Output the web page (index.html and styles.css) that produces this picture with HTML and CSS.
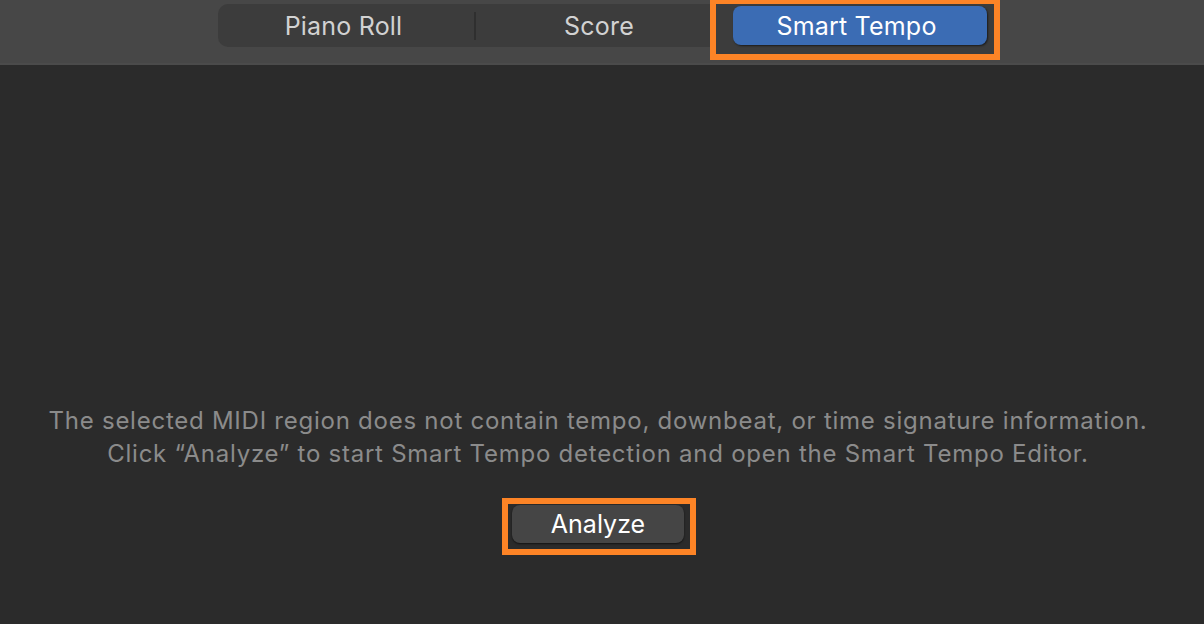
FILE: index.html
```html
<!DOCTYPE html>
<html lang="en">
<head>
    <meta charset="UTF-8">
    <meta name="viewport" content="width=device-width, initial-scale=1.0">
    <title>Smart Tempo</title>
    <link rel="stylesheet" href="styles.css">
</head>
<body>
    <div class="toolbar">
        <div class="segmented">
            <button class="segment piano">Piano Roll</button>
            <span class="divider"></span>
            <button class="segment score">Score</button>
            <button class="segment active">Smart Tempo</button>
        </div>
    </div>

    <main class="editor">
        <p class="notice">
            The selected MIDI region does not contain tempo, downbeat, or time signature information.<br>
            Click “Analyze” to start Smart Tempo detection and open the Smart Tempo Editor.
        </p>
        <button class="analyze">Analyze</button>
    </main>
</body>
</html>
```

FILE: styles.css
```css
* {
    margin: 0;
    padding: 0;
    box-sizing: border-box;
}
:root {
    --toolbar-bg: #474747;
    --control-bg: #3c3c3c;
    --editor-bg: #2b2b2b;
    --accent-blue: #3b6cb4;
    --callout: #fd8426;
}
body {
    font-family: Inter, 'Liberation Sans', Arial, sans-serif;
    background-color: var(--editor-bg);
    color: #fff;
    height: 100vh;
    overflow: hidden;
}
button {
    font-family: inherit;
    border: none;
    cursor: pointer;
}
.toolbar {
    height: 65px;
    background: var(--toolbar-bg);
    border-bottom: 2px solid #4b4b4b;
    display: flex;
    justify-content: center;
    padding: 4px 0 0 4px;
}
.segmented {
    position: relative;
    z-index: 0;
    width: 773px;
    height: 43px;
    display: flex;
    align-items: center;
    padding: 2px 4px;
    background: var(--control-bg);
    border-radius: 10px;
}
.segment {
    height: 39px;
    background: transparent;
    color: #d2d2d2;
    font-size: 25px;
    letter-spacing: 0.2px;
    border-radius: 8px;
}
.segment.piano {
    width: 252px;
    padding-right: 8px;
}
.segment.score {
    flex: 1;
    padding-right: 10px;
}
.segment.active {
    position: relative;
    width: 254px;
    background: var(--accent-blue);
    color: #fff;
    padding-right: 6px;
    box-shadow: 1px 1px 2px rgba(0, 0, 0, 0.55);
}
.divider {
    width: 2px;
    height: 28px;
    background: #2f2f2f;
}
/* orange highlight round the active tab */
.segment.active::before {
    content: "";
    position: absolute;
    top: -8px;
    left: -23px;
    right: -13px;
    bottom: -15px;
    border: 6px solid var(--callout);
    background: var(--control-bg);
    z-index: -1;
}
.editor {
    display: flex;
    flex-direction: column;
    align-items: center;
    padding-right: 8px;
}
.notice {
    margin-top: 339px;
    font-size: 24px;
    letter-spacing: 0.75px;
    line-height: 33px;
    color: #8b8b8b;
    text-align: center;
}
.analyze {
    position: relative;
    margin-top: 35px;
    width: 172px;
    height: 38px;
    background: #454545;
    color: #fff;
    font-size: 25px;
    border-radius: 8px;
    box-shadow: 0 1px 2px rgba(0, 0, 0, 0.6);
}
.analyze::before {
    content: "";
    position: absolute;
    top: -7px;
    left: -10px;
    right: -12px;
    bottom: -12px;
    border: 6px solid var(--callout);
    pointer-events: none;
}
```
